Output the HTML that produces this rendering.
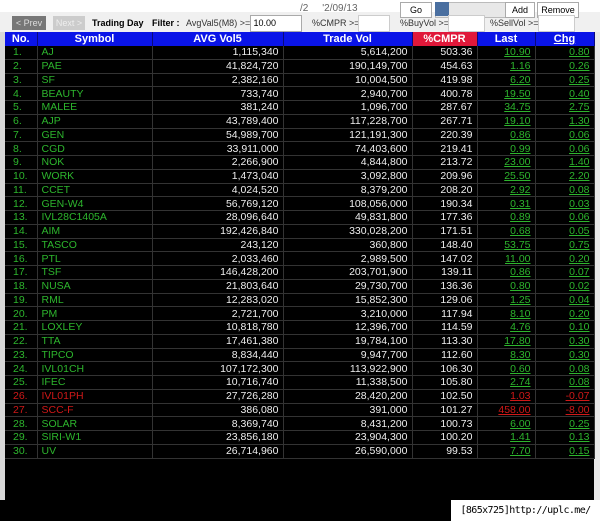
<!DOCTYPE html>
<html><head><style>
body{margin:0;width:600px;height:521px;background:#000;position:relative;overflow:hidden;font-family:"Liberation Sans",sans-serif}
.a{position:absolute}
table{position:absolute;left:5px;top:32px;width:589px;border-collapse:collapse;table-layout:fixed;font-size:10.5px}
th{background:#0a14e8;color:#fff;height:14px;font-size:11px;padding:0;border-right:1px solid #0a0a7a}
td{height:12.75px;border-bottom:1px solid #333;border-right:1px solid #333;color:#eee;padding:0 4px;text-align:right;white-space:nowrap;line-height:12px;overflow:hidden}
td.n{color:#2db52d;text-align:left;padding-left:8px}
td.s{color:#2db52d;text-align:left}
td.g{color:#2db52d;text-decoration:underline}
tr.r td.n,tr.r td.s,tr.r td.g{color:#d01818}
.btn{position:absolute;top:16px;height:14px;font-size:9px;line-height:14px;text-align:center}
</style></head><body>
<div class="a" style="left:0;top:0;width:600px;height:32px;background:#f0f0f0"></div>
<div class="a" style="left:0;top:0;width:600px;height:12px;background:#fff"></div>
<div class="a" style="left:300px;top:3px;width:100px;height:12px;font-size:10px;color:#666">/2&nbsp;&nbsp;&nbsp;&nbsp;&nbsp;'2/09/13</div>
<div class="a" style="left:400px;top:2px;width:30px;height:14px;background:#fff;border:1px solid #aaa;font-size:9px;text-align:center;line-height:14px">Go</div>
<div class="a" style="left:435px;top:2px;width:70px;height:14px;background:#e8e8e8;border:1px solid #bbb"></div>
<div class="a" style="left:435px;top:2px;width:14px;height:14px;background:#4a6fa0"></div>
<div class="a" style="left:505px;top:2px;width:28px;height:14px;background:#fff;border:1px solid #aaa;font-size:9px;text-align:center;line-height:14px">Add</div>
<div class="a" style="left:537px;top:2px;width:40px;height:14px;background:#fff;border:1px solid #aaa;font-size:9px;text-align:center;line-height:14px">Remove</div>
<div class="btn" style="left:12px;width:34px;background:#777;color:#ddd">&lt; Prev</div>
<div class="btn" style="left:53px;width:32px;background:#ccc;color:#eee">Next &gt;</div>
<div class="btn" style="left:92px;font-weight:bold;color:#000">Trading Day</div>
<div class="btn" style="left:152px;font-weight:bold;color:#000">Filter :</div>
<div class="btn" style="left:186px;color:#333">AvgVal5(M8) &gt;=</div>
<div class="a" style="left:250px;top:15px;width:50px;height:15px;background:#fff;border:1px solid #aaa;font-size:9px;line-height:15px">&nbsp;10.00</div>
<div class="btn" style="left:312px;color:#333">%CMPR &gt;=</div>
<div class="a" style="left:358px;top:15px;width:30px;height:15px;background:#fff;border:1px solid #ccc"></div>
<div class="btn" style="left:400px;color:#333">%BuyVol &gt;=</div>
<div class="a" style="left:448px;top:15px;width:35px;height:15px;background:#fff;border:1px solid #ccc"></div>
<div class="btn" style="left:490px;color:#333">%SellVol &gt;=</div>
<div class="a" style="left:538px;top:15px;width:35px;height:15px;background:#fff;border:1px solid #ccc"></div>
<div class="a" style="left:0;top:32px;width:5px;height:468px;background:#d8d8d8"></div>
<div class="a" style="left:594px;top:32px;width:6px;height:468px;background:#e8e8e8"></div>
<table>
<colgroup><col style="width:32px"><col style="width:115px"><col style="width:131px"><col style="width:129px"><col style="width:65px"><col style="width:58px"><col style="width:59px"></colgroup>
<tr><th>No.</th><th>Symbol</th><th>AVG Vol5</th><th>Trade Vol</th><th style="background:#e0183a">%CMPR</th><th>Last</th><th style="text-decoration:underline">Chg</th></tr>
<tr><td class="n">1.</td><td class="s">AJ</td><td>1,115,340</td><td>5,614,200</td><td>503.36</td><td class="g">10.90</td><td class="g">0.80</td></tr>
<tr><td class="n">2.</td><td class="s">PAE</td><td>41,824,720</td><td>190,149,700</td><td>454.63</td><td class="g">1.16</td><td class="g">0.26</td></tr>
<tr><td class="n">3.</td><td class="s">SF</td><td>2,382,160</td><td>10,004,500</td><td>419.98</td><td class="g">6.20</td><td class="g">0.25</td></tr>
<tr><td class="n">4.</td><td class="s">BEAUTY</td><td>733,740</td><td>2,940,700</td><td>400.78</td><td class="g">19.50</td><td class="g">0.40</td></tr>
<tr><td class="n">5.</td><td class="s">MALEE</td><td>381,240</td><td>1,096,700</td><td>287.67</td><td class="g">34.75</td><td class="g">2.75</td></tr>
<tr><td class="n">6.</td><td class="s">AJP</td><td>43,789,400</td><td>117,228,700</td><td>267.71</td><td class="g">19.10</td><td class="g">1.30</td></tr>
<tr><td class="n">7.</td><td class="s">GEN</td><td>54,989,700</td><td>121,191,300</td><td>220.39</td><td class="g">0.86</td><td class="g">0.06</td></tr>
<tr><td class="n">8.</td><td class="s">CGD</td><td>33,911,000</td><td>74,403,600</td><td>219.41</td><td class="g">0.99</td><td class="g">0.06</td></tr>
<tr><td class="n">9.</td><td class="s">NOK</td><td>2,266,900</td><td>4,844,800</td><td>213.72</td><td class="g">23.00</td><td class="g">1.40</td></tr>
<tr><td class="n">10.</td><td class="s">WORK</td><td>1,473,040</td><td>3,092,800</td><td>209.96</td><td class="g">25.50</td><td class="g">2.20</td></tr>
<tr><td class="n">11.</td><td class="s">CCET</td><td>4,024,520</td><td>8,379,200</td><td>208.20</td><td class="g">2.92</td><td class="g">0.08</td></tr>
<tr><td class="n">12.</td><td class="s">GEN-W4</td><td>56,769,120</td><td>108,056,000</td><td>190.34</td><td class="g">0.31</td><td class="g">0.03</td></tr>
<tr><td class="n">13.</td><td class="s">IVL28C1405A</td><td>28,096,640</td><td>49,831,800</td><td>177.36</td><td class="g">0.89</td><td class="g">0.06</td></tr>
<tr><td class="n">14.</td><td class="s">AIM</td><td>192,426,840</td><td>330,028,200</td><td>171.51</td><td class="g">0.68</td><td class="g">0.05</td></tr>
<tr><td class="n">15.</td><td class="s">TASCO</td><td>243,120</td><td>360,800</td><td>148.40</td><td class="g">53.75</td><td class="g">0.75</td></tr>
<tr><td class="n">16.</td><td class="s">PTL</td><td>2,033,460</td><td>2,989,500</td><td>147.02</td><td class="g">11.00</td><td class="g">0.20</td></tr>
<tr><td class="n">17.</td><td class="s">TSF</td><td>146,428,200</td><td>203,701,900</td><td>139.11</td><td class="g">0.86</td><td class="g">0.07</td></tr>
<tr><td class="n">18.</td><td class="s">NUSA</td><td>21,803,640</td><td>29,730,700</td><td>136.36</td><td class="g">0.80</td><td class="g">0.02</td></tr>
<tr><td class="n">19.</td><td class="s">RML</td><td>12,283,020</td><td>15,852,300</td><td>129.06</td><td class="g">1.25</td><td class="g">0.04</td></tr>
<tr><td class="n">20.</td><td class="s">PM</td><td>2,721,700</td><td>3,210,000</td><td>117.94</td><td class="g">8.10</td><td class="g">0.20</td></tr>
<tr><td class="n">21.</td><td class="s">LOXLEY</td><td>10,818,780</td><td>12,396,700</td><td>114.59</td><td class="g">4.76</td><td class="g">0.10</td></tr>
<tr><td class="n">22.</td><td class="s">TTA</td><td>17,461,380</td><td>19,784,100</td><td>113.30</td><td class="g">17.80</td><td class="g">0.30</td></tr>
<tr><td class="n">23.</td><td class="s">TIPCO</td><td>8,834,440</td><td>9,947,700</td><td>112.60</td><td class="g">8.30</td><td class="g">0.30</td></tr>
<tr><td class="n">24.</td><td class="s">IVL01CH</td><td>107,172,300</td><td>113,922,900</td><td>106.30</td><td class="g">0.60</td><td class="g">0.08</td></tr>
<tr><td class="n">25.</td><td class="s">IFEC</td><td>10,716,740</td><td>11,338,500</td><td>105.80</td><td class="g">2.74</td><td class="g">0.08</td></tr>
<tr class="r"><td class="n">26.</td><td class="s">IVL01PH</td><td>27,726,280</td><td>28,420,200</td><td>102.50</td><td class="g">1.03</td><td class="g">-0.07</td></tr>
<tr class="r"><td class="n">27.</td><td class="s">SCC-F</td><td>386,080</td><td>391,000</td><td>101.27</td><td class="g">458.00</td><td class="g">-8.00</td></tr>
<tr><td class="n">28.</td><td class="s">SOLAR</td><td>8,369,740</td><td>8,431,200</td><td>100.73</td><td class="g">6.00</td><td class="g">0.25</td></tr>
<tr><td class="n">29.</td><td class="s">SIRI-W1</td><td>23,856,180</td><td>23,904,300</td><td>100.20</td><td class="g">1.41</td><td class="g">0.13</td></tr>
<tr><td class="n">30.</td><td class="s">UV</td><td>26,714,960</td><td>26,590,000</td><td>99.53</td><td class="g">7.70</td><td class="g">0.15</td></tr>
</table>
<div class="a" style="left:451px;top:500px;width:149px;height:21px;background:#fff;font-family:'DejaVu Sans Mono',monospace;font-size:10px;letter-spacing:-0.6px;line-height:21px;text-align:center;color:#000;white-space:nowrap;overflow:hidden">[865x725]http://uplc.me/</div>
</body></html>
